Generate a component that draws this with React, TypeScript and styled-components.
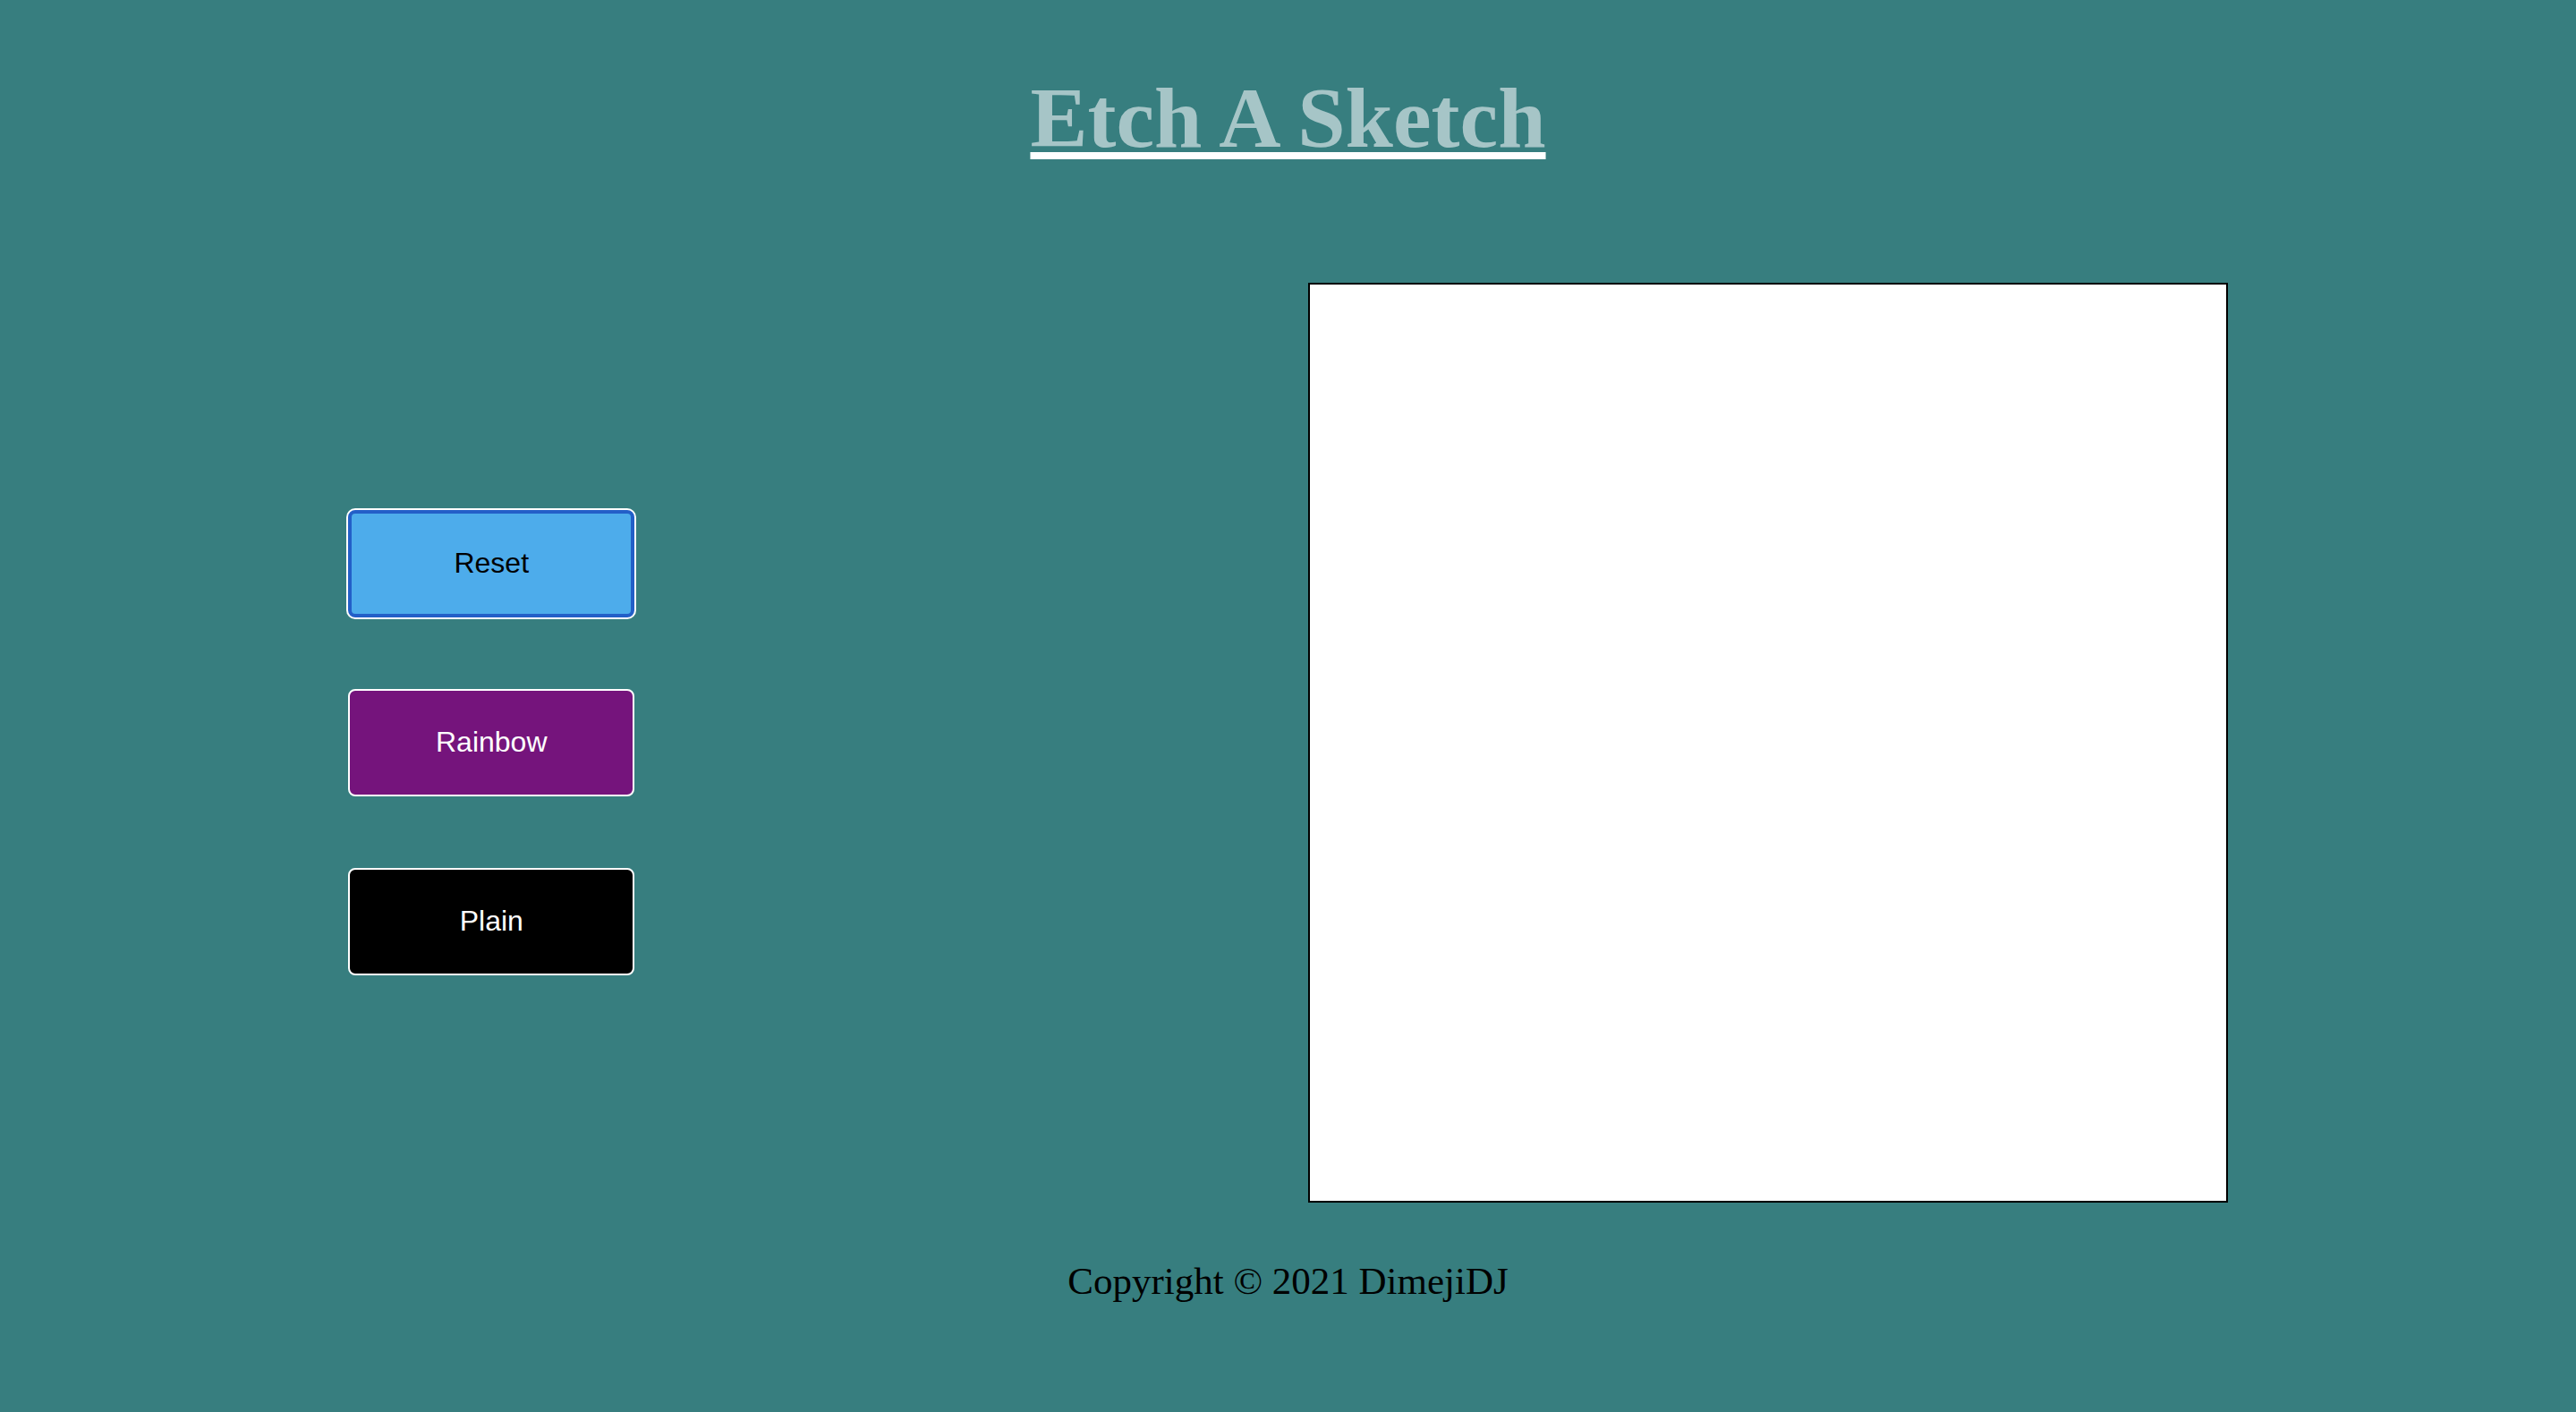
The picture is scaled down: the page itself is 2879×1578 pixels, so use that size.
import React from "react";
import styled, { createGlobalStyle } from "styled-components";

const GlobalStyle = createGlobalStyle`
  *, *::before, *::after {
    box-sizing: border-box;
  }

  body {
    margin: 0;
    background: #377e7f;
    font-family: "Liberation Serif", "Times New Roman", serif;
  }
`;

const Page = styled.div`
  display: flex;
  flex-direction: column;
  min-height: 100vh;
  padding: 0 13px;
`;

const Header = styled.header`
  padding: 77px 0 129px;
  text-align: center;
`;

const Title = styled.h1`
  margin: 0;
  color: #a6c5c7;
  font-size: 96px;
  line-height: 110px;
  text-decoration: underline 8px #fff;
  text-underline-offset: 6px;
`;

const Main = styled.main`
  display: flex;
  flex-wrap: wrap;
  align-items: center;
  justify-content: space-around;
`;

const Controls = styled.div`
  display: flex;
  flex-direction: column;
  gap: 80px;
`;

const ModeButton = styled.button<{ $bg: string; $ink: string; $active?: boolean }>`
  width: 320px;
  height: 120px;
  padding: 0 0 2px;
  border: ${(p) => (p.$active ? "4px solid #235fc8" : "2px solid #fff")};
  border-radius: 8px;
  outline: none;
  box-shadow: ${(p) => (p.$active ? "0 0 0 2px #fff" : "none")};
  background: ${(p) => p.$bg};
  color: ${(p) => p.$ink};
  font-family: "Liberation Sans", Arial, sans-serif;
  font-size: 32px;
  line-height: 36px;
  cursor: pointer;
`;

const SketchPad = styled.div`
  width: 1028px;
  max-width: 100%;
  aspect-ratio: 1;
  border: 2px solid #000;
  background: #fff;
`;

const Footer = styled.footer`
  padding: 63px 0;
  font-size: 43px;
  line-height: 50px;
  text-align: center;
`;

export default function App() {
  return (
    <>
      <GlobalStyle />
      <Page>
        <Header>
          <Title>Etch A Sketch</Title>
        </Header>
        <Main>
          <Controls>
            <ModeButton type="button" $bg="#4daceb" $ink="#000" $active>
              Reset
            </ModeButton>
            <ModeButton type="button" $bg="#75147c" $ink="#fff">
              Rainbow
            </ModeButton>
            <ModeButton type="button" $bg="#000" $ink="#fff">
              Plain
            </ModeButton>
          </Controls>
          <SketchPad />
        </Main>
        <Footer>Copyright © 2021 DimejiDJ</Footer>
      </Page>
    </>
  );
}
